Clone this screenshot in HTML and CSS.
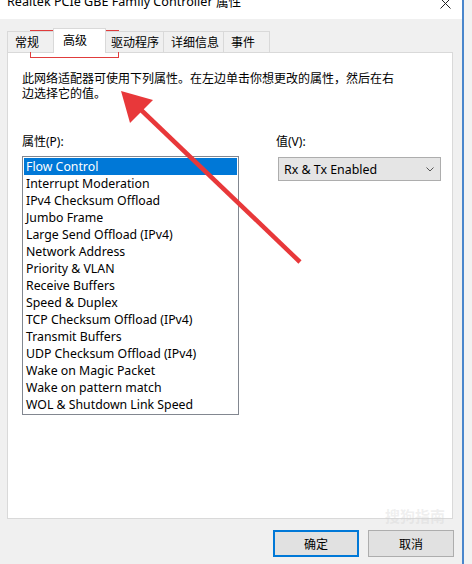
FILE: index.html
```html
<!DOCTYPE html>
<html lang="zh">
<head>
<meta charset="utf-8">
<title>Realtek PCIe GBE Family Controller 属性</title>
<link rel="stylesheet" href="styles.css">
</head>
<body>
<div class="screen">
  <div class="window">
    <div class="titlebar">
      <span class="title">Realtek PCIe GBE Family Controller 属性</span>
      <svg class="close" width="11" height="9" viewBox="0 0 11 9"><path d="M0.5 -1.5 L10.5 8.5 M10.5 -1.5 L0.5 8.5" stroke="#222" stroke-width="1" fill="none"/></svg>
    </div>
    <div class="body">
      <div class="tabs">
        <div class="tab t1">常规</div>
        <div class="tab t2 active">高级</div>
        <div class="tab t3">驱动程序</div>
        <div class="tab t4">详细信息</div>
        <div class="tab t5">事件</div>
      </div>
      <div class="panel">
        <p class="desc"><span>此网络适配器可使用下列属性。在左边单击你想更改的属性，然后在右</span><span>边选择它的值。</span></p>
        <div class="fields">
          <div class="col-left">
            <div class="label">属性(P):</div>
            <ul class="list">
              <li class="selected">Flow Control</li>
              <li>Interrupt Moderation</li>
              <li>IPv4 Checksum Offload</li>
              <li>Jumbo Frame</li>
              <li>Large Send Offload (IPv4)</li>
              <li>Network Address</li>
              <li>Priority &amp; VLAN</li>
              <li>Receive Buffers</li>
              <li>Speed &amp; Duplex</li>
              <li>TCP Checksum Offload (IPv4)</li>
              <li>Transmit Buffers</li>
              <li>UDP Checksum Offload (IPv4)</li>
              <li>Wake on Magic Packet</li>
              <li>Wake on pattern match</li>
              <li>WOL &amp; Shutdown Link Speed</li>
            </ul>
          </div>
          <div class="col-right">
            <div class="label">值(V):</div>
            <div class="combo">
              <span>Rx &amp; Tx Enabled</span>
              <svg class="chev" width="8" height="5" viewBox="0 0 8 5"><path d="M0.5 0.5 L4 4 L7.5 0.5" stroke="#555" stroke-width="1" fill="none"/></svg>
            </div>
          </div>
        </div>
      </div>
      <div class="buttons">
        <button class="btn default">确定</button>
        <button class="btn">取消</button>
      </div>
    </div>
  </div>
  <div class="edge"></div>
  <div class="watermark">搜狗指南</div>
  <svg class="annot" width="472" height="564" viewBox="0 0 472 564">
    <rect x="30.5" y="30.5" width="88" height="27" fill="none" stroke="#e03c3c" stroke-width="1"/>
    <line x1="138" y1="107" x2="300" y2="262" stroke="#e8383a" stroke-width="4.5" stroke-linecap="butt"/>
    <polygon points="121,91 153,100 130,123" fill="#e8383a"/>
  </svg>
</div>
</body>
</html>
```

FILE: styles.css
```css
* { box-sizing: border-box; }
html, body { margin: 0; padding: 0; }
body {
  width: 472px;
  height: 564px;
  overflow: hidden;
  background: #f0f0f0;
  font-family: "Noto Sans", "Noto Sans CJK SC", sans-serif;
  font-size: 12px;
  color: #000;
}
.screen {
  position: relative;
  width: 472px;
  height: 564px;
  display: flex;
}
.window {
  width: 462px;
  height: 564px;
  display: flex;
  flex-direction: column;
  background: #f0f0f0;
}
.edge {
  width: 10px;
  border-left: 2px solid #4a86cc;
  background: #f2f2f2;
}
.titlebar {
  height: 19px;
  background: #fff;
  display: flex;
  align-items: flex-start;
  padding-left: 7px;
  position: relative;
  overflow: hidden;
}
.title {
  font-family: "Noto Sans", "Noto Sans CJK SC", sans-serif;
  font-size: 12.6px;
  line-height: 14px;
  position: relative;
  top: -5px;
  white-space: nowrap;
}
.close {
  position: absolute;
  right: 11px;
  top: 0;
}
.body {
  flex: 1;
  padding: 9px 8px 0 7px;
  display: flex;
  flex-direction: column;
}
.tabs {
  display: flex;
  align-items: flex-end;
  height: 24px;
  position: relative;
  z-index: 2;
}
.tab {
  font-family: "Noto Sans CJK SC", sans-serif;
  font-size: 12px;
  height: 21px;
  line-height: 20px;
  border: 1px solid #d9d9d9;
  border-bottom: none;
  background: #f0f0f0;
  margin-right: -1px;
  padding-left: 7px;
  white-space: nowrap;
}
.tab.active {
  height: 25px;
  line-height: 22px;
  background: #fff;
  margin-bottom: -1px;
  padding-left: 9px;
  position: relative;
  z-index: 3;
}
.t1 { width: 47px; }
.t2 { width: 53px; }
.t3 { width: 59px; padding-left: 5px; }
.t4 { width: 61px; }
.t5 { width: 47px; }
.panel {
  width: 446px;
  height: 467px;
  background: #fff;
  border: 1px solid #d9d9d9;
  padding: 17px 14px 0 14px;
}
.desc {
  margin: 0;
  font-family: "Noto Sans CJK SC", sans-serif;
  font-size: 12px;
  line-height: 15px;
}
.desc span { display: block; white-space: nowrap; }
.fields {
  display: flex;
  margin-top: 34px;
}
.label {
  font-family: "Noto Sans", "Noto Sans CJK SC", sans-serif;
  font-size: 12px;
  line-height: 15px;
  height: 15px;
}
.col-left { width: 217px; }
.col-right { margin-left: 37px; }
.list {
  list-style: none;
  margin: 7px 0 0 0;
  padding: 1px;
  width: 217px;
  height: 259px;
  border: 1px solid #828790;
}
.list li {
  height: 17px;
  line-height: 17px;
  padding-left: 2px;
  font-size: 12.3px;
  white-space: nowrap;
}
.list li.selected {
  background: #0078d7;
  color: #fff;
}
.combo {
  margin-top: 8px;
  margin-left: 2px;
  width: 163px;
  height: 24px;
  background: #e5e5e5;
  border: 1px solid #adadad;
  display: flex;
  align-items: center;
  justify-content: space-between;
  padding: 0 6px 0 5px;
  font-size: 12.4px;
}
.chev { margin-top: 1px; }
.buttons {
  display: flex;
  justify-content: flex-end;
  gap: 9px;
  margin-top: 11px;
}
.btn {
  width: 86px;
  height: 27px;
  background: #e1e1e1;
  border: 1px solid #adadad;
  font-family: "Noto Sans CJK SC", sans-serif;
  font-size: 12px;
  padding: 0;
  color: #000;
}
.btn.default {
  border: 2px solid #0078d7;
}
.watermark {
  position: absolute;
  left: 385px;
  top: 505px;
  font-family: "Noto Sans CJK SC", sans-serif;
  font-size: 15px;
  font-weight: bold;
  color: rgba(210, 210, 210, 0.35);
}
.annot {
  position: absolute;
  left: 0;
  top: 0;
  pointer-events: none;
}
```
